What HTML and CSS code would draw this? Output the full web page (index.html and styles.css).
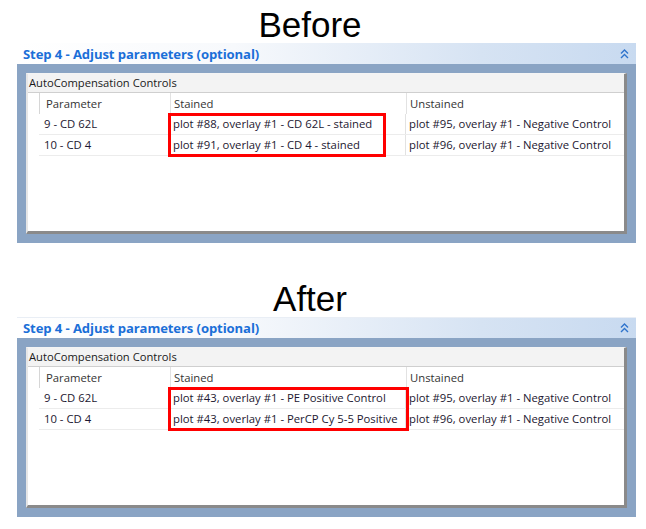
FILE: index.html
```html
<!DOCTYPE html>
<html>
<head>
<meta charset="utf-8">
<link rel="stylesheet" href="styles.css">
</head>
<body>
<div class="section">
  <div class="heading">Before</div>
  <div class="panel">
    <div class="panel-head">
      <span class="panel-title">Step 4 - Adjust parameters (optional)</span>
      <svg class="chev" width="9" height="10" viewBox="0 0 9 10"><polyline points="1,4.5 4.5,1 8,4.5" /><polyline points="1,9 4.5,5.5 8,9" /></svg>
    </div>
    <div class="panel-body">
      <div class="group">
        <div class="group-title">AutoCompensation Controls</div>
        <div class="grid-area">
          <div class="grid">
            <div class="row head"><div class="rh"></div><div class="c c1">Parameter</div><div class="c c2">Stained</div><div class="c c3">Unstained</div></div>
            <div class="row"><div class="rh"></div><div class="c c1">9 - CD 62L</div><div class="c c2">plot #88, overlay #1 - CD 62L - stained</div><div class="c c3">plot #95, overlay #1 - Negative Control</div></div>
            <div class="row"><div class="rh"></div><div class="c c1">10 - CD 4</div><div class="c c2">plot #91, overlay #1 - CD 4 - stained</div><div class="c c3">plot #96, overlay #1 - Negative Control</div></div>
          </div>
          <div class="highlight hl-before"></div>
        </div>
      </div>
    </div>
  </div>
</div>
<div class="section second">
  <div class="heading">After</div>
  <div class="panel">
    <div class="panel-head top-line">
      <span class="panel-title">Step 4 - Adjust parameters (optional)</span>
      <svg class="chev" width="9" height="10" viewBox="0 0 9 10"><polyline points="1,4.5 4.5,1 8,4.5" /><polyline points="1,9 4.5,5.5 8,9" /></svg>
    </div>
    <div class="panel-body">
      <div class="group">
        <div class="group-title">AutoCompensation Controls</div>
        <div class="grid-area">
          <div class="grid">
            <div class="row head"><div class="rh"></div><div class="c c1">Parameter</div><div class="c c2">Stained</div><div class="c c3">Unstained</div></div>
            <div class="row"><div class="rh"></div><div class="c c1">9 - CD 62L</div><div class="c c2">plot #43, overlay #1 - PE Positive Control</div><div class="c c3">plot #95, overlay #1 - Negative Control</div></div>
            <div class="row"><div class="rh"></div><div class="c c1">10 - CD 4</div><div class="c c2">plot #43, overlay #1 - PerCP Cy 5-5 Positive</div><div class="c c3">plot #96, overlay #1 - Negative Control</div></div>
          </div>
          <div class="highlight hl-after"></div>
        </div>
      </div>
    </div>
  </div>
</div>
</body>
</html>
```

FILE: styles.css
```css
html, body {
  margin: 0;
  padding: 0;
  background: #ffffff;
}
body {
  width: 646px;
  height: 529px;
  overflow: hidden;
  font-family: "Open Sans", sans-serif;
}
.section.second {
  margin-top: 31px;
}
.heading {
  height: 43px;
  box-sizing: border-box;
  padding-top: 7px;
  padding-right: 26px;
  line-height: 36px;
  text-align: center;
  font-family: "Liberation Sans", Arial, sans-serif;
  font-size: 35px;
  color: #000;
}
.panel {
  margin-left: 17px;
  width: 619px;
}
.panel-head {
  height: 21px;
  box-sizing: border-box;
  display: flex;
  align-items: center;
  justify-content: space-between;
  padding: 0 6px 0 6px;
  background: linear-gradient(to right, #ffffff 0%, #f7f9fc 35%, #d6e3f3 75%, #c8daf0 100%);
}
.panel-head.top-line {
  border-top: 1px solid #e9eef5;
}
.panel-title {
  font-family: "Open Sans", sans-serif;
  font-weight: 700;
  font-size: 13.1px;
  color: #1b6fd8;
  letter-spacing: -0.1px;
}
.chev {
  display: block;
  margin-right: 1px;
}
.chev polyline {
  fill: none;
  stroke: #2f74cc;
  stroke-width: 1.4;
}
.panel-body {
  background: #8aa4c4;
  padding: 9px;
  height: 179px;
  box-sizing: border-box;
}
.group {
  height: 161px;
  box-sizing: border-box;
  background: #ffffff;
  border-top: 1px solid #f4f4f4;
  border-left: 2px solid #e6e6e6;
  border-right: 3px solid #8a8a8a;
  border-bottom: 3px solid #8a8a8a;
  display: flex;
  flex-direction: column;
}
.group-title {
  height: 19px;
  box-sizing: border-box;
  background: #f3f3f3;
  border-bottom: 1px solid #cfcfcf;
  padding-left: 1px;
  font-family: "Open Sans", sans-serif;
  font-size: 11.2px;
  line-height: 18px;
  color: #1a1a1a;
}
.grid-area {
  position: relative;
  flex: 1;
  padding-left: 11px;
}
.grid {
  display: flex;
  flex-direction: column;
}
.row {
  display: flex;
  height: 20px;
  border-bottom: 1px solid #ececec;
}
.row.head {
  height: 21px;
  border-bottom: none;
}
.rh {
  width: 2px;
  border-left: 1px solid #d6d6d6;
}
.row:not(.head) .rh {
  border-left: none;
}
.c {
  font-family: "Open Sans", sans-serif;
  font-size: 11.3px;
  line-height: 20px;
  color: #1c1730;
  white-space: nowrap;
  overflow: hidden;
  box-sizing: border-box;
}
.head .c {
  line-height: 21px;
  color: #333333;
}
.c1 {
  width: 129px;
  padding-left: 3px;
  border-right: 1px solid #e2e2e2;
}
.c2 {
  width: 236px;
  padding-left: 3px;
  border-right: 1px solid #e2e2e2;
  overflow: visible;
}
.c3 {
  flex: 1;
  padding-left: 3px;
}
.head .c1 { padding-left: 4px; }
.highlight {
  position: absolute;
  border: 3px solid #ff0000;
  box-sizing: border-box;
  top: 20px;
  height: 44px;
}
.hl-before {
  left: 140px;
  width: 218px;
}
.hl-after {
  left: 140px;
  width: 241px;
}
```
